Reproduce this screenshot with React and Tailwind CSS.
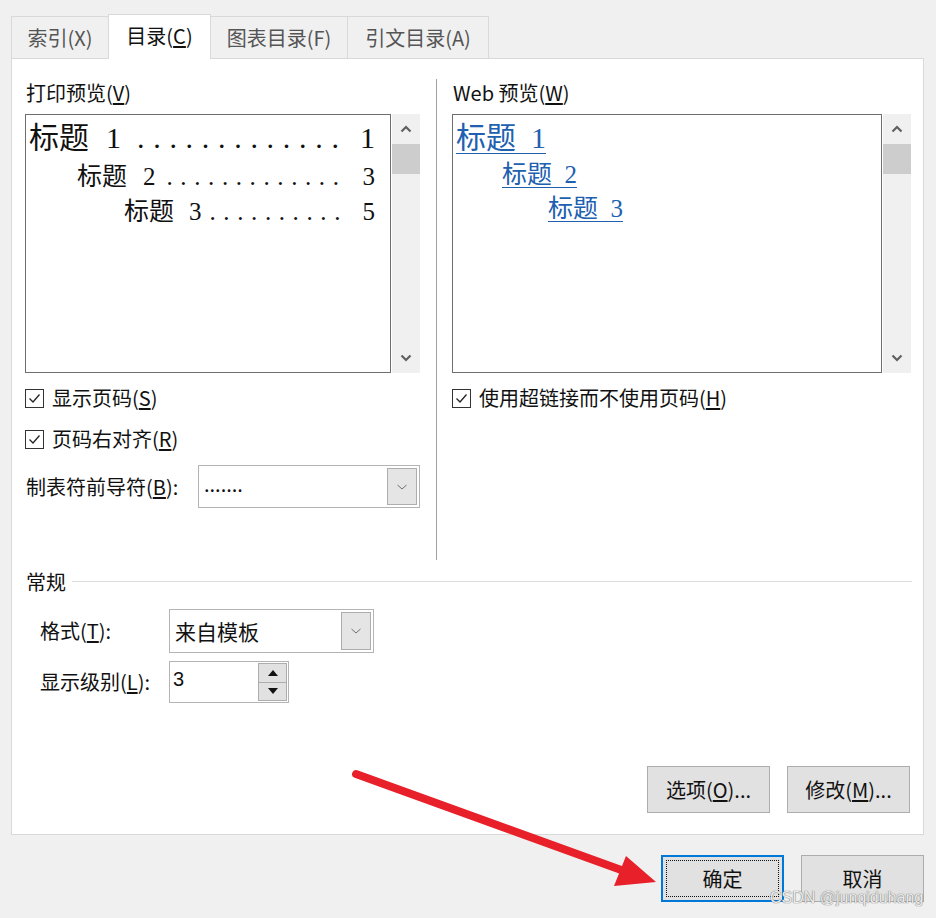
import React from "react";

const Chevron = ({ dir = "down", className = "" }) => (
  <svg width="12" height="8" viewBox="0 0 12 8" className={className}>
    {dir === "down" ? (
      <polyline points="1.5,1.5 6,6 10.5,1.5" fill="none" stroke="#606060" strokeWidth="2.2" />
    ) : (
      <polyline points="1.5,6.5 6,2 10.5,6.5" fill="none" stroke="#606060" strokeWidth="2.2" />
    )}
  </svg>
);

const ThinChevron = () => (
  <svg width="12" height="8" viewBox="0 0 12 8">
    <polyline points="1.5,2 6,6 10.5,2" fill="none" stroke="#707070" strokeWidth="1" />
  </svg>
);

const Scrollbar = () => (
  <div className="w-[28px] ml-[1px] h-full bg-[#f0f0f0] flex flex-col">
    <div className="h-[30px] flex items-center justify-center">
      <Chevron dir="up" />
    </div>
    <div className="h-[30px] bg-[#cdcdcd]" />
    <div className="flex-1" />
    <div className="h-[30px] flex items-center justify-center">
      <Chevron dir="down" />
    </div>
  </div>
);

const Checkbox = ({ children }) => (
  <div className="flex items-center h-[24px]">
    <div className="w-[19px] h-[19px] border border-[#333333] bg-white flex items-center justify-center">
      <svg width="15" height="15" viewBox="0 0 15 15">
        <polyline points="2.5,7.5 6,11 12.5,3.5" fill="none" stroke="#222" strokeWidth="1.3" />
      </svg>
    </div>
    <span className="ml-[8px] text-[20px] leading-[24px] text-[#111]">{children}</span>
  </div>
);

const Combo = ({ w, h, text, textClass }) => (
  <div className={`${w} ${h} border border-[#b4b4b4] bg-white flex items-center`}>
    <div className={`flex-1 pl-[5px] ${textClass}`}>{text}</div>
    <div className="w-[30px] h-[calc(100%-4px)] mr-[2px] bg-[#e5e5e5] border border-[#adadad] flex items-center justify-center">
      <ThinChevron />
    </div>
  </div>
);

const Btn = ({ children, primary }) => (
  <div
    className={`w-[123px] h-[47px] bg-[#e1e1e1] flex items-center justify-center text-[20px] text-[#111] ${
      primary ? "border-2 border-[#0078d7]" : "border border-[#adadad]"
    }`}
  >
    {primary ? (
      <div className="w-[113px] h-[37px] border border-dotted border-[#111] flex items-center justify-center">
        {children}
      </div>
    ) : (
      children
    )}
  </div>
);

export default function App() {
  return (
    <div className="relative w-[936px] h-[918px] bg-[#f0f0f0] overflow-hidden font-['Noto_Sans_CJK_SC','Liberation_Sans',sans-serif] text-[#111]">
      {/* Tabs */}
      <div className="flex items-end pl-[11px] pt-[14px]">
        <div className="w-[97px] h-[42px] border-l border-t border-[#d9d9d9] bg-[#f0f0f0] flex items-center justify-center text-[20px] text-[#555]">
          索引(X)
        </div>
        <div className="relative z-10 w-[103px] h-[45px] -mb-px border-l border-t border-r border-[#d9d9d9] bg-white flex items-center justify-center text-[20px] text-[#111] pb-[2px]">
          目录(<u className="underline-offset-2">C</u>)
        </div>
        <div className="w-[137px] h-[42px] border-t border-r border-[#d9d9d9] bg-[#f0f0f0] flex items-center justify-center text-[20px] text-[#555]">
          图表目录(F)
        </div>
        <div className="w-[141px] h-[42px] border-t border-r border-[#d9d9d9] bg-[#f0f0f0] flex items-center justify-center text-[20px] text-[#555]">
          引文目录(A)
        </div>
      </div>

      {/* Panel */}
      <div className="ml-[11px] w-[913px] h-[777px] bg-white border border-[#d9d9d9] flex flex-col">
        {/* Top section */}
        <div className="flex h-[501px] pt-[22px]">
          {/* Left column */}
          <div className="pl-[13px] w-[408px] flex flex-col">
            <div className="h-[24px] leading-[24px] text-[20px] pl-[1px]">
              打印预览(<u className="underline-offset-2">V</u>)
            </div>
            <div className="mt-[9px] h-[259px] flex">
              <div className="w-[366px] h-full border border-[#6e6e6e] bg-white pr-[15px] pl-[3px] font-['Liberation_Serif','Noto_Sans_CJK_SC',serif] text-[#111]">
                <div className="h-[44px] flex items-center justify-between text-[30px] leading-none pt-[2px]">
                  <span className="flex items-center">
                    <span>标题</span>
                    <span className="ml-[17px]">1</span>
                    <span className="ml-[16px] tracking-[8.7px]">.............</span>
                  </span>
                  <span>1</span>
                </div>
                <div className="h-[35px] flex items-center justify-between text-[25px] leading-none pl-[48px]">
                  <span className="flex items-center">
                    <span>标题</span>
                    <span className="ml-[16px]">2</span>
                    <span className="ml-[11px] tracking-[7.6px]">.............</span>
                  </span>
                  <span>3</span>
                </div>
                <div className="h-[35px] flex items-center justify-between text-[25px] leading-none pl-[95px]">
                  <span className="flex items-center">
                    <span>标题</span>
                    <span className="ml-[15px]">3</span>
                    <span className="ml-[8px] tracking-[7.6px]">..........</span>
                  </span>
                  <span>5</span>
                </div>
              </div>
              <Scrollbar />
            </div>
            <div className="mt-[13px]">
              <Checkbox>
                显示页码(<u className="underline-offset-2">S</u>)
              </Checkbox>
            </div>
            <div className="mt-[17px]">
              <Checkbox>
                页码右对齐(<u className="underline-offset-2">R</u>)
              </Checkbox>
            </div>
            <div className="mt-[14px] flex items-center">
              <div className="w-[173px] text-[20px] leading-[24px] pl-[1px]">
                制表符前导符(<u className="underline-offset-2">B</u>):
              </div>
              <Combo w="w-[222px]" h="h-[43px]" text="......." textClass="text-[20px] leading-none pb-[6px]" />
            </div>
          </div>

          {/* Divider */}
          <div className="ml-[16px] w-px bg-[#a0a0a0] -mt-[2px]" />

          {/* Right column */}
          <div className="ml-[15px] flex flex-col">
            <div className="h-[24px] leading-[24px] text-[20px] pl-[1px]">
              Web 预览(<u className="underline-offset-2">W</u>)
            </div>
            <div className="mt-[9px] h-[259px] flex">
              <div className="w-[430px] h-full border border-[#6e6e6e] bg-white pl-[3px] font-['Liberation_Serif','Noto_Sans_CJK_SC',serif] text-[#2060b0]">
                <div className="h-[42px] flex items-center text-[30px] leading-none pt-[4px]">
                  <span className="whitespace-pre underline decoration-1 underline-offset-[5px]">标题  1</span>
                </div>
                <div className="h-[34px] flex items-center text-[25px] leading-none pl-[46px]">
                  <span className="whitespace-pre underline decoration-1 underline-offset-[4px]">标题  2</span>
                </div>
                <div className="h-[34px] flex items-center text-[25px] leading-none pl-[92px]">
                  <span className="whitespace-pre underline decoration-1 underline-offset-[4px]">标题  3</span>
                </div>
              </div>
              <Scrollbar />
            </div>
            <div className="mt-[13px]">
              <Checkbox>
                使用超链接而不使用页码(<u className="underline-offset-2">H</u>)
              </Checkbox>
            </div>
          </div>
        </div>

        {/* General section */}
        <div className="mt-[10px] flex items-center h-[24px] pl-[14px] pr-[11px]">
          <span className="text-[20px] leading-[24px]">常规</span>
          <div className="flex-1 ml-[6px] h-px bg-[#dcdcdc] -mt-[2px]" />
        </div>
        <div className="mt-[15px] flex items-center pl-[28px]">
          <div className="w-[129px] text-[20px] leading-[24px]">
            格式(<u className="underline-offset-2">T</u>):
          </div>
          <Combo w="w-[205px]" h="h-[44px]" text="来自模板" textClass="text-[21px] leading-[26px]" />
        </div>
        <div className="mt-[8px] flex items-center pl-[28px]">
          <div className="w-[129px] text-[20px] leading-[24px]">
            显示级别(<u className="underline-offset-2">L</u>):
          </div>
          <div className="w-[120px] h-[42px] border border-[#b4b4b4] bg-white flex items-stretch">
            <div className="flex-1 pl-[3px] text-[20px] leading-[24px] pt-[5px] font-['Liberation_Sans',sans-serif]">3</div>
            <div className="w-[29px] mr-[1px] my-[1px] flex flex-col">
              <div className="flex-1 bg-[#e1e1e1] border border-[#adadad] flex items-center justify-center">
                <svg width="10" height="6" viewBox="0 0 10 6"><polygon points="0,6 10,6 5,0" fill="#111" /></svg>
              </div>
              <div className="flex-1 bg-[#e1e1e1] border border-t-0 border-[#adadad] flex items-center justify-center">
                <svg width="10" height="6" viewBox="0 0 10 6"><polygon points="0,0 10,0 5,6" fill="#111" /></svg>
              </div>
            </div>
          </div>
        </div>
        <div className="mt-[63px] flex justify-end gap-[17px] pr-[13px]">
          <Btn>
            选项(<u className="underline-offset-2">O</u>)...
          </Btn>
          <Btn>
            修改(<u className="underline-offset-2">M</u>)...
          </Btn>
        </div>
      </div>

      {/* Bottom buttons */}
      <div className="mt-[20px] flex justify-end gap-[17px] pr-[12px]">
        <Btn primary>确定</Btn>
        <Btn>取消</Btn>
      </div>

      {/* Red arrow overlay */}
      <svg className="absolute left-0 top-0 pointer-events-none" width="936" height="918" viewBox="0 0 936 918">
        <line x1="356" y1="774" x2="624" y2="871" stroke="#e8202a" strokeWidth="8" strokeLinecap="round" />
        <polygon points="656,882 626,856 614,886" fill="#e8202a" />
      </svg>

      {/* Watermark */}
      <div className="absolute left-[770px] top-[887px] text-[16px] leading-[22px] text-[#ececec] font-['Liberation_Sans',sans-serif] [text-shadow:0_0_1px_#777,0_0_1px_#777]">
        CSDN @junqiduhang
      </div>
    </div>
  );
}
